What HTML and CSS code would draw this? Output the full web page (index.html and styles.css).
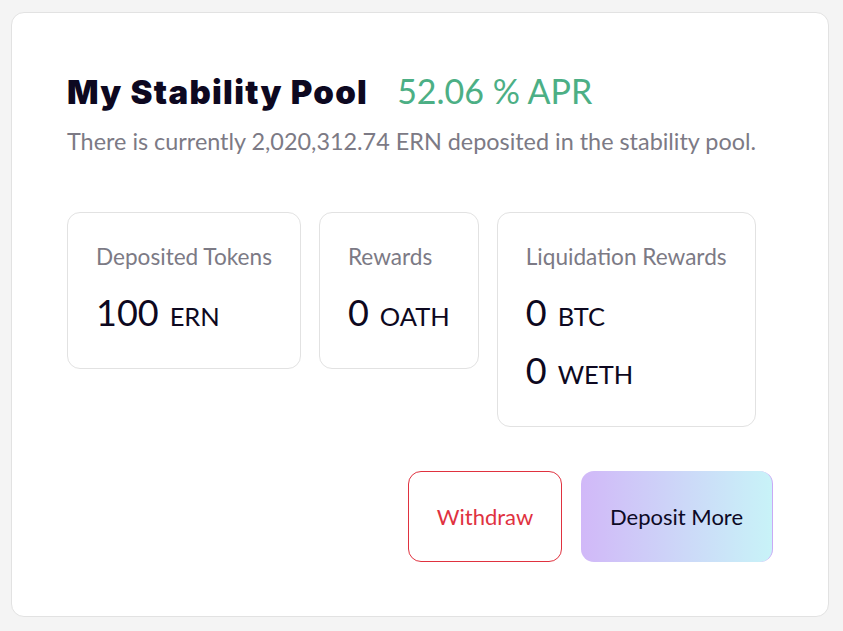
FILE: index.html
```html
<!DOCTYPE html>
<html>
<head>
<meta charset="utf-8">
<link rel="stylesheet" href="styles.css">
</head>
<body>
<div class="card">
  <div class="head">
    <h1 class="title">My Stability Pool</h1>
    <span class="apr">52.06 % APR</span>
  </div>
  <p class="sub">There is currently 2,020,312.74 ERN deposited in the stability pool.</p>
  <div class="stats">
    <div class="stat">
      <div class="label">Deposited Tokens</div>
      <div class="val"><span class="num">100</span><span class="unit">ERN</span></div>
    </div>
    <div class="stat">
      <div class="label">Rewards</div>
      <div class="val"><span class="num">0</span><span class="unit">OATH</span></div>
    </div>
    <div class="stat">
      <div class="label">Liquidation Rewards</div>
      <div class="val"><span class="num">0</span><span class="unit">BTC</span></div>
      <div class="val"><span class="num">0</span><span class="unit">WETH</span></div>
    </div>
  </div>
  <div class="actions">
    <button class="btn withdraw">Withdraw</button>
    <button class="btn deposit">Deposit More</button>
  </div>
</div>
</body>
</html>
```
FILE: styles.css
```css
html, body { margin: 0; padding: 0; }
body {
  background: #f4f4f4;
  padding: 12px 0 0 11px;
  font-family: "Lato", "Noto Sans", sans-serif;
}
.card {
  box-sizing: border-box;
  width: 818px;
  height: 605px;
  background: #fff;
  border: 1px solid #e2e2e2;
  border-radius: 13px;
  padding: 57px 55px 0 55px;
}
.head {
  display: flex;
  align-items: baseline;
  gap: 29px;
}
.title {
  margin: 0;
  font-family: "Inter", sans-serif;
  font-weight: 900;
  font-size: 33px;
  letter-spacing: 1.3px;
  color: #0d0820;
  line-height: 40px;
}
.apr {
  font-size: 34px;
  color: #4caf85;
}
.sub {
  margin: 14px 0 0 0;
  font-size: 23.4px;
  color: #7c7a85;
  line-height: 30px;
}
.stats {
  display: flex;
  align-items: flex-start;
  gap: 18px;
  margin-top: 56px;
}
.stat {
  border: 1px solid #e2e2e2;
  border-radius: 13px;
  padding: 30px 28px 35px 28px;
}
.label {
  font-size: 22.6px;
  color: #7c7a85;
  line-height: 28px;
}
.val {
  display: flex;
  align-items: baseline;
  height: 42px;
  line-height: 42px;
  margin-top: 20px;
  color: #0d0820;
}
.val + .val { margin-top: 16px; }
.num { font-size: 36px; }
.unit { font-size: 25.5px; margin-left: 11px; }
.actions {
  display: flex;
  justify-content: flex-end;
  gap: 19px;
  margin-top: 44px;
}
.btn {
  font-family: inherit;
  font-size: 22px;
  border-radius: 13px;
  height: 91px;
  cursor: pointer;
}
.withdraw {
  width: 154px;
  background: #fff;
  border: 1px solid #e0323f;
  color: #e0323f;
}
.deposit {
  width: 192px;
  border: none;
  border-right: 1px solid #c9a9f5;
  color: #0d0a26;
  background: linear-gradient(90deg, #d1b8f8, #c8f3f8);
}
```
